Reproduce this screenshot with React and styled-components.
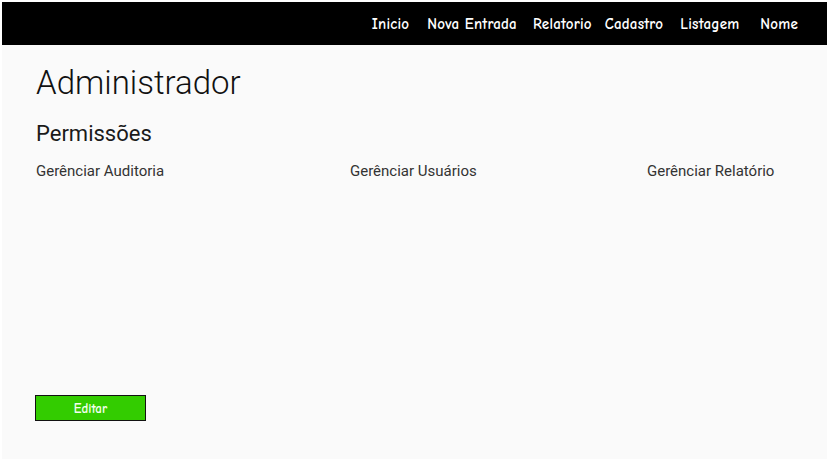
import React from 'react';
import styled, { createGlobalStyle } from 'styled-components';

const GlobalStyle = createGlobalStyle`
  html, body {
    margin: 0;
    padding: 0;
    background: #ffffff;
  }
  body {
    font-family: Roboto, "Liberation Sans", sans-serif;
  }
`;

const handFont = `"Comic Sans MS", "Comic Neue", cursive`;

const Frame = styled.div`
  margin: 2px;
  height: 457px;
  background: #fafafa;
  display: flex;
  flex-direction: column;
`;

const NavBar = styled.nav`
  height: 43px;
  background: #000;
  display: flex;
  align-items: center;
  justify-content: flex-end;
  padding-right: 29px;
`;

const NavItem = styled.a`
  color: #fff;
  font-family: ${handFont};
  font-size: 15px;
  font-weight: 700;
  letter-spacing: 0.2px;
  margin-left: ${({ gap }) => gap}px;
  text-decoration: none;
  white-space: nowrap;
`;

const Content = styled.main`
  flex: 1;
  padding: 0 34px;
  display: flex;
  flex-direction: column;
`;

const Title = styled.h1`
  margin: 18px 0 0;
  font-size: 33px;
  font-weight: 300;
  color: #111;
  line-height: 40px;
`;

const Subtitle = styled.h2`
  margin: 16px 0 0;
  font-size: 22px;
  font-weight: 400;
  color: #1a1a1a;
  line-height: 30px;
`;

const PermissionRow = styled.div`
  display: grid;
  grid-template-columns: 314px 297px auto;
  margin-top: 12px;
`;

const Permission = styled.span`
  font-size: 15px;
  color: #333;
  line-height: 20px;
`;

const Spacer = styled.div`
  flex: 1;
`;

const EditButton = styled.button`
  width: 111px;
  height: 26px;
  margin: 0 0 38px -1px;
  background: #33cc00;
  border: 1px solid #111;
  color: #f4fff0;
  font-family: ${handFont};
  font-size: 13px;
  font-weight: 700;
  padding: 0;
  cursor: pointer;
`;

const links = [
  { label: 'Inicio', gap: 0 },
  { label: 'Nova Entrada', gap: 18 },
  { label: 'Relatorio', gap: 16 },
  { label: 'Cadastro', gap: 13 },
  { label: 'Listagem', gap: 17 },
  { label: 'Nome', gap: 21 },
];

const permissions = ['Gerênciar Auditoria', 'Gerênciar Usuários', 'Gerênciar Relatório'];

export default function App() {
  return (
    <>
      <GlobalStyle />
      <Frame>
        <NavBar>
          {links.map((l) => (
            <NavItem key={l.label} gap={l.gap}>{l.label}</NavItem>
          ))}
        </NavBar>
        <Content>
          <Title>Administrador</Title>
          <Subtitle>Permissões</Subtitle>
          <PermissionRow>
            {permissions.map((p) => (
              <Permission key={p}>{p}</Permission>
            ))}
          </PermissionRow>
          <Spacer />
          <EditButton>Editar</EditButton>
        </Content>
      </Frame>
    </>
  );
}
